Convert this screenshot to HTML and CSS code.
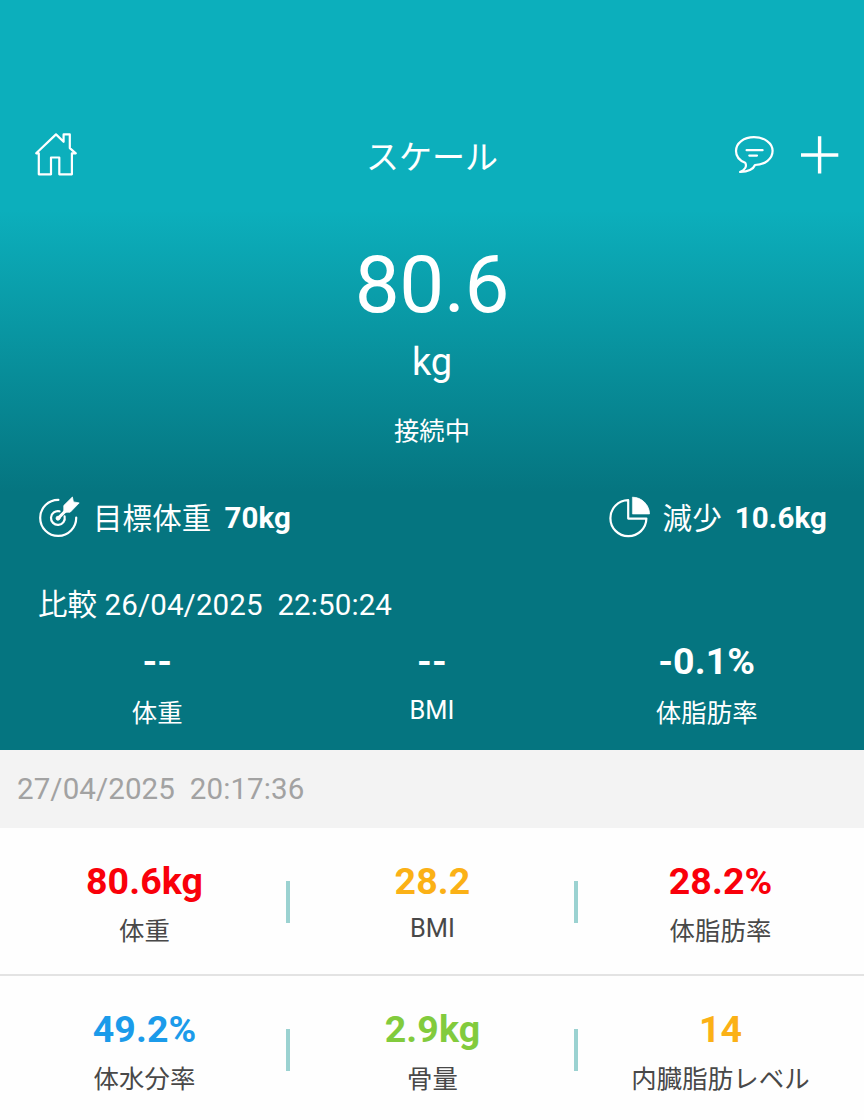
FILE: index.html
```html
<!DOCTYPE html>
<html lang="ja">
<head>
<meta charset="utf-8">
<title>スケール</title>
<link rel="stylesheet" href="styles.css">
</head>
<body>
<header class="hero">
  <nav class="nav">
    <svg class="icon-home" width="44" height="46" viewBox="0 0 44 46"><path d="M2.2 21.3 22 2.4 29.6 9.8V2.4H35.8V16.1L41.8 21.3H37.9V42.3H25.3V25.5H17V42.3H4.8V21.3Z"/></svg>
    <h1 class="title">スケール</h1>
    <div class="actions">
      <svg class="icon-chat" width="42" height="42" viewBox="0 0 42 42"><path d="M12.2 28.8C6.4 26.5 3 22 3 17 3 9 10.8 3.2 21 3.2S39.6 9 39.6 16.8C39.6 25 32 30.6 22 31 20.5 35 15 38.2 7 38 11.8 35.8 14.3 32.5 12.2 28.8Z"/><path d="M13.6 16.2H29.6M16.3 21.6H24"/></svg>
      <svg class="icon-plus" width="40" height="40" viewBox="0 0 40 40"><path d="M1 20H38.3M19.6 1.2V38.5"/></svg>
    </div>
  </nav>
  <div class="weight">80.6</div>
  <div class="unit">kg</div>
  <div class="status">接続中</div>
  <div class="goals">
    <div class="goal">
      <svg class="icon-goal" width="42" height="44" viewBox="0 0 42 44"><path d="M20.4 4.9A18 18 0 1 0 38.2 22.6"/><path d="M21.5 16.3A6.9 6.9 0 1 0 26.6 21.4"/><path class="shaft" d="M19.8 23.6 29.5 13.9"/><path class="solid" d="M25.8 17V10.5L34.4 2 35.4 6.9 41.2 7.9 32.4 17Z"/><circle class="solid" cx="20" cy="23.2" r="2"/></svg>
      <span class="goal-name">目標体重</span><b>70kg</b>
    </div>
    <div class="goal">
      <svg class="icon-goal" width="42" height="44" viewBox="0 0 42 44"><path d="M20.2 5.2V23.6H38.4A18 18 0 1 1 20.2 5.2Z"/><path class="solid" d="M24.8 2.2A17 17 0 0 1 41.5 18.9H24.8Z"/></svg>
      <span class="goal-name">減少</span><b>10.6kg</b>
    </div>
  </div>
  <div class="compare">比較 26/04/2025&nbsp; 22:50:24</div>
  <div class="deltas">
    <div class="cell"><b class="value">--</b><span class="label">体重</span></div>
    <div class="cell"><b class="value">--</b><span class="label latin">BMI</span></div>
    <div class="cell"><b class="value">-0.1%</b><span class="label">体脂肪率</span></div>
  </div>
</header>
<div class="date">27/04/2025&nbsp; 20:17:36</div>
<main>
  <section class="metrics">
    <div class="cell"><b class="value red">80.6kg</b><span class="label">体重</span></div>
    <div class="cell"><b class="value amber">28.2</b><span class="label latin">BMI</span></div>
    <div class="cell"><b class="value red">28.2%</b><span class="label">体脂肪率</span></div>
  </section>
  <section class="metrics">
    <div class="cell"><b class="value blue">49.2%</b><span class="label">体水分率</span></div>
    <div class="cell"><b class="value green">2.9kg</b><span class="label">骨量</span></div>
    <div class="cell"><b class="value amber">14</b><span class="label">内臓脂肪レベル</span></div>
  </section>
</main>
</body>
</html>
```
FILE: styles.css
```css
* { box-sizing: border-box; }
body {
  margin: 0;
  height: 1120px;
  overflow: hidden;
  background: #fefefe;
  font-family: Roboto, "Noto Sans CJK JP", sans-serif;
  font-size: 29.5px;
  letter-spacing: 0.1px;
}
svg { display: block; fill: none; stroke: #fff; stroke-width: 2.2; stroke-linejoin: round; stroke-linecap: round; }
.hero {
  height: 750px;
  padding-top: 120px;
  color: #fff;
  background: linear-gradient(#0cafbc 0, #0cafbc 210px, #057580 492px, #057580 100%);
}
.nav {
  display: grid;
  grid-template-columns: 1fr auto 1fr;
  align-items: center;
  height: 70px;
  padding: 0 24px 0 34px;
}
.title { margin: 0; padding: 5px 10px 0 0; font-size: 33px; font-weight: 400; line-height: 65px; letter-spacing: 0; }
.actions { display: flex; align-items: center; justify-content: flex-end; gap: 25px; }
.icon-plus { stroke-width: 3.4; stroke-linecap: butt; }
.icon-goal { margin-bottom: 2px; }
.icon-goal .shaft { stroke-width: 3; }
.icon-goal .solid { fill: #fff; stroke-width: 0.8; }
.weight { margin-top: 50px; font-size: 80px; line-height: 90px; letter-spacing: -0.4px; text-align: center; }
.unit { margin-top: 10px; font-size: 38px; line-height: 45px; letter-spacing: 0; text-align: center; }
.status { margin-top: 29px; font-size: 25.3px; line-height: 36px; text-align: center; }
.goals {
  display: flex;
  justify-content: space-between;
  height: 50px;
  margin-top: 43px;
  padding: 0 37px 0 38px;
}
.goal { display: flex; align-items: center; line-height: 50px; }
.goal-name { margin: 0 13px; padding-top: 2px; line-height: 48px; }
.compare { margin-top: 42px; padding-left: 38px; line-height: 40px; }
.deltas { display: grid; grid-template-columns: repeat(3, 1fr); margin-top: 14px; padding: 0 20px; }
.cell { display: flex; flex-direction: column; align-items: center; }
.value { font-size: 37.5px; line-height: 44px; }
.label { margin-top: 14px; font-size: 25.4px; line-height: 32px; }
.deltas .latin { margin-top: 11px; }
.date { height: 78px; padding-left: 17px; line-height: 78px; color: #a2a2a2; background: #f3f3f3; }
.metrics {
  display: grid;
  grid-template-columns: repeat(3, 1fr);
  height: 148px;
  padding-top: 31px;
  border-bottom: 2px solid #e3e3e3;
}
.metrics .cell { position: relative; padding-left: 1px; }
.metrics .label { margin-top: 12px; color: #484848; }
.metrics .latin { margin-top: 9px; }
.metrics .cell:not(:last-child)::after {
  content: "";
  position: absolute;
  top: 22px;
  right: -2px;
  width: 4px;
  height: 42px;
  background: #9bd2d1;
}
.red { color: #f9000a; }
.amber { color: #fbb116; }
.blue { color: #1b9bea; }
.green { color: #82cb3d; }
```
